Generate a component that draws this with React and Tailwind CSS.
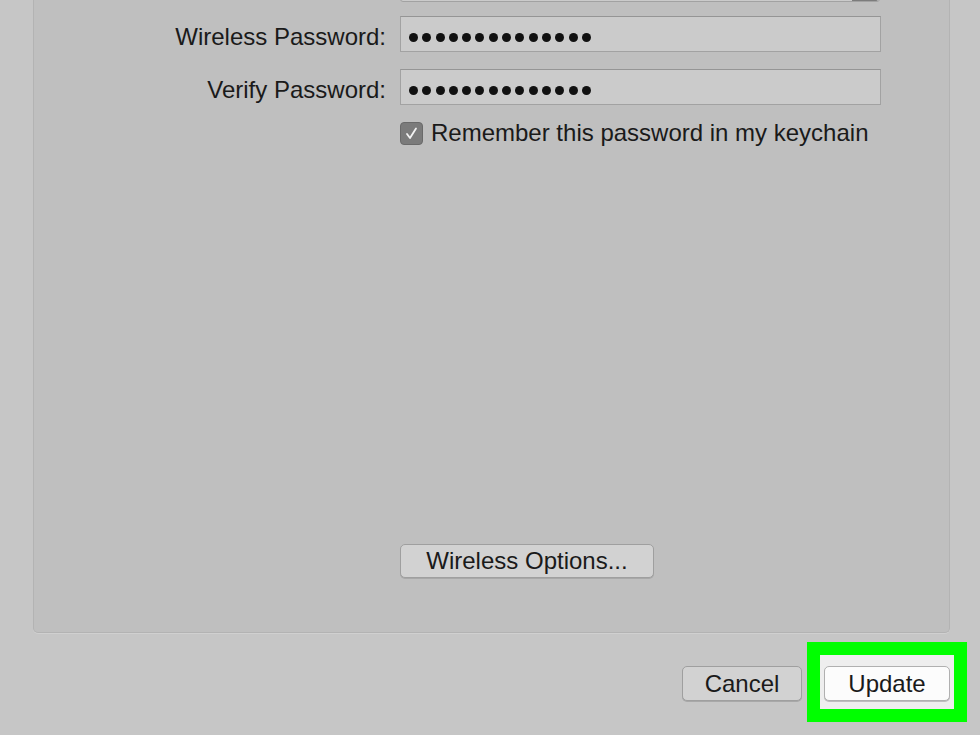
import React from 'react';

const font = { fontFamily: '"Liberation Sans", Arial, sans-serif' };

const Dots = ({ count = 14 }) => (
  <div className="flex gap-[4.3px] pt-[6px]">
    {Array.from({ length: count }).map((_, i) => (
      <span key={i} className="block w-[9px] h-[9px] rounded-full bg-[#111]" />
    ))}
  </div>
);

const PasswordRow = ({ label, className = '' }) => (
  <div className={`flex items-center ${className}`}>
    <div className="w-[352px] pt-[6px] text-right text-[24px] leading-none text-[#1a1a1a]">{label}</div>
    <div className="ml-[14px] w-[481px] h-[36px] flex items-center pl-[8px] bg-[#cbcbcb] border border-[#a2a2a2] border-t-[#959595]">
      <Dots />
    </div>
  </div>
);

const App = () => {
  return (
    <div className="w-[980px] h-[735px] bg-[#c6c6c6] overflow-hidden" style={font}>
      <div className="ml-[33px] w-[917px] h-[633px] bg-[#bfbfbf] border-x border-b border-[#b3b3b3] rounded-b-[5px] flex flex-col shadow-[0_1px_0_#d0d0d0]">
        {/* popup cut off at the top */}
        <div className="flex -mt-[30px]">
          <div className="ml-[366px] w-[480px] h-[32px] flex justify-end bg-[#cbcbcb] border border-[#a2a2a2] rounded-[3px]">
            <div className="w-[26px] h-full bg-[#7c7c7c] rounded-r-[2px] mr-[1px]" />
          </div>
        </div>

        <PasswordRow label="Wireless Password:" className="mt-[14px]" />
        <PasswordRow label="Verify Password:" className="mt-[17px]" />

        <div className="flex items-center mt-[16px] ml-[366px]">
          <div className="w-[23px] h-[23px] rounded-[4px] bg-[#7b7b7b] border border-[#6a6a6a] flex items-center justify-center">
            <svg width="15" height="15" viewBox="0 0 15 15" fill="none">
              <path d="M3 8 L6 12 L12 2.5" stroke="#f2f2f2" strokeWidth="1.8" strokeLinecap="round" strokeLinejoin="round" />
            </svg>
          </div>
          <span className="ml-[8px] text-[24px] leading-none text-[#1a1a1a]">Remember this password in my keychain</span>
        </div>

        <div className="flex mt-[399px] ml-[366px]">
          <button className="w-[254px] h-[34px] rounded-[5px] bg-[#d2d2d2] border border-[#9f9f9f] shadow-[0_1px_0_#a8a8a8] text-[24px] leading-none text-[#1a1a1a]">
            Wireless Options...
          </button>
        </div>
      </div>

      <div className="flex justify-end items-start mt-[9px] pr-[13px]">
        <button className="mt-[24px] w-[120px] h-[35px] rounded-[5px] bg-[#d2d2d2] border border-[#9f9f9f] shadow-[0_1px_0_#a8a8a8] text-[24px] leading-none text-[#1a1a1a]">
          Cancel
        </button>
        <div className="ml-[5px] border-[13px] border-[#00ff00] bg-[#eeeeee] pt-[11px] pb-[8px] px-[4px]">
          <button className="block w-[126px] h-[35px] rounded-[5px] bg-[#fcfcfc] border border-[#b0b0b0] shadow-[0_1px_0_#bdbdbd] text-[24px] leading-none text-[#1a1a1a]">
            Update
          </button>
        </div>
      </div>
    </div>
  );
};

export default App;
